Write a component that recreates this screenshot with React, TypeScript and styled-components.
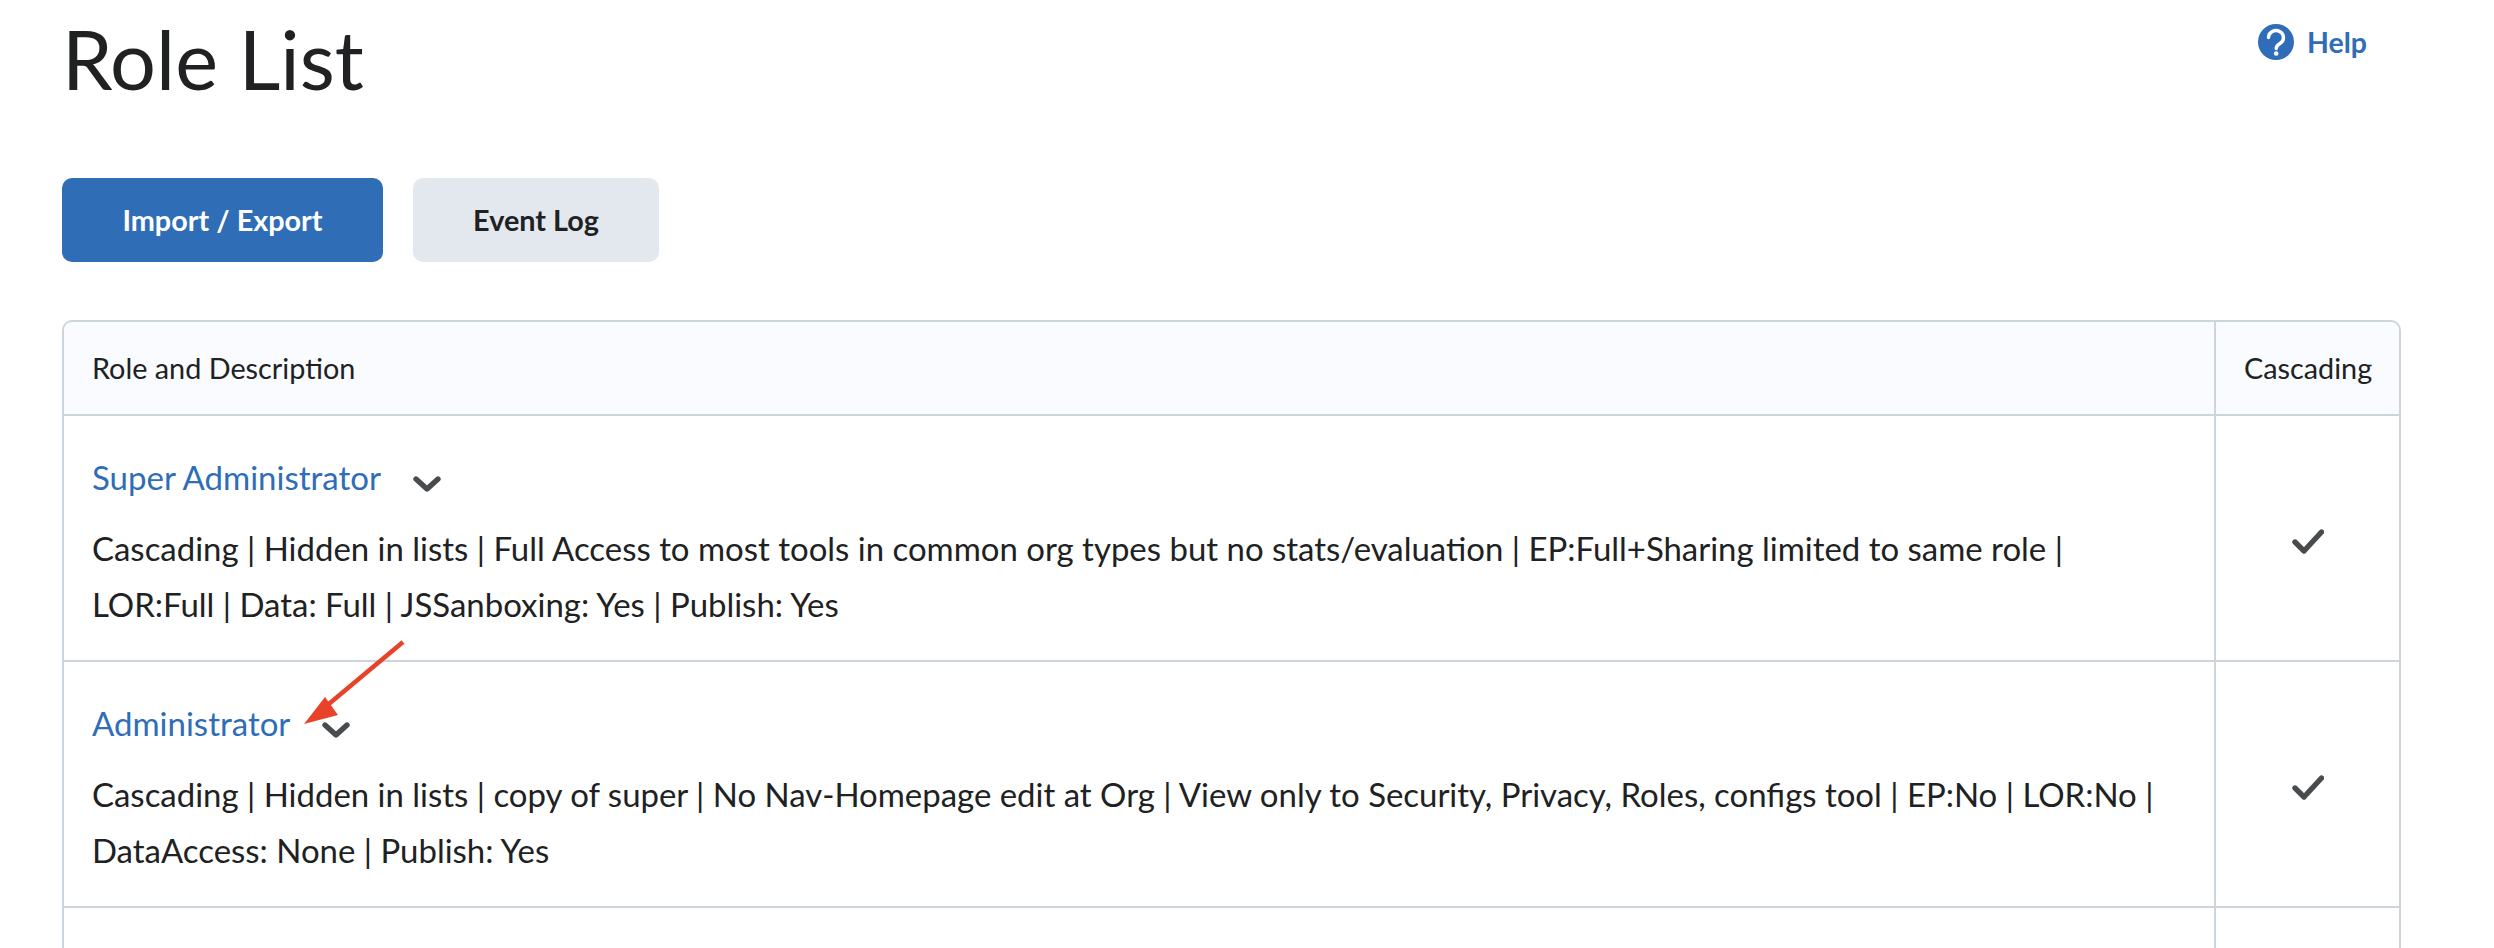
import React from "react";
import styled, { createGlobalStyle } from "styled-components";

const GlobalStyle = createGlobalStyle`
  html, body {
    margin: 0;
    padding: 0;
    background: #ffffff;
    height: 948px;
    overflow: hidden;
  }
  body {
    font-family: Lato, "Open Sans", sans-serif;
    color: #202122;
  }
`;

const Page = styled.main`
  position: relative;
  width: 2494px;
  height: 948px;
  padding: 0 93px 0 62px;
  box-sizing: border-box;
  overflow: hidden;
`;

const TopBar = styled.header`
  display: flex;
  justify-content: space-between;
  align-items: flex-start;
  height: 178px;
`;

const Title = styled.h1`
  margin: 0;
  padding-top: 12px;
  font-size: 81px;
  line-height: 94px;
  font-weight: 400;
`;

const HelpLink = styled.a`
  display: flex;
  align-items: center;
  gap: 13px;
  margin: 24px 34px 0 0;
  height: 36px;
  color: #2f6db8;
  font-size: 28.5px;
  font-weight: 700;
`;

const Actions = styled.div`
  display: flex;
  gap: 30px;
  margin-bottom: 58px;
`;

const Button = styled.button<{ $primary?: boolean }>`
  height: 84px;
  padding: 0;
  width: ${(p) => (p.$primary ? "321px" : "246px")};
  border: none;
  border-radius: 10px;
  background: ${(p) => (p.$primary ? "#306db7" : "#e3e8ef")};
  color: ${(p) => (p.$primary ? "#ffffff" : "#202122")};
  font-family: inherit;
  font-size: 28.8px;
  line-height: 82px;
  font-weight: 700;
`;

const Table = styled.table`
  width: 2339px;
  table-layout: fixed;
  border-collapse: separate;
  border-spacing: 0;
`;

const HeadCell = styled.th<{ $last?: boolean }>`
  height: 96px;
  box-sizing: border-box;
  padding: 0 28px;
  background: #f9fbff;
  font-size: 28.8px;
  font-weight: 400;
  text-align: ${(p) => (p.$last ? "center" : "left")};
  border-top: 2px solid #cdd5dc;
  border-bottom: 2px solid #cdd5dc;
  border-left: 2px solid #cdd5dc;
  border-right: ${(p) => (p.$last ? "2px solid #cdd5dc" : "none")};
  border-top-left-radius: ${(p) => (p.$last ? "0" : "10px")};
  border-top-right-radius: ${(p) => (p.$last ? "10px" : "0")};
`;

const Cell = styled.td<{ $last?: boolean; $height: number }>`
  height: ${(p) => p.$height}px;
  box-sizing: border-box;
  padding: 0 28px;
  vertical-align: middle;
  border-bottom: 2px solid #cdd5dc;
  border-left: 2px solid #cdd5dc;
  border-right: ${(p) => (p.$last ? "2px solid #cdd5dc" : "none")};
  text-align: ${(p) => (p.$last ? "center" : "left")};
`;

const NameRow = styled.div`
  display: flex;
  align-items: center;
  gap: 32px;
  height: 44px;
  margin: 11px 0 22px;
`;

const RoleName = styled.a`
  color: #2f6db8;
  font-size: 33px;
  line-height: 44px;
`;

const Description = styled.p`
  margin: 0;
  font-size: 32.95px;
  line-height: 55.5px;
`;

const Chevron = styled.svg`
  width: 28px;
  height: 16px;
  margin-top: 14px;
  flex: none;
`;

const Check = styled.svg`
  width: 32px;
  height: 25px;
  display: block;
  margin: 7px auto 0;
`;

const Arrow = styled.svg`
  position: absolute;
  left: 300px;
  top: 636px;
  width: 110px;
  height: 92px;
`;

const ChevronIcon = () => (
  <Chevron viewBox="0 0 28 16">
    <path d="M3 3l11 10L25 3" fill="none" stroke="#494c4e" strokeWidth="5.4" strokeLinecap="round" strokeLinejoin="round" />
  </Chevron>
);

const CheckIcon = () => (
  <Check viewBox="0 0 32 25">
    <path d="M3 13l9 9L29.500 3" fill="none" stroke="#494c4e" strokeWidth="5.400" strokeLinecap="round" strokeLinejoin="round" />
  </Check>
);

const HelpIcon = () => (
  <svg width="36" height="36" viewBox="0 0 36 36">
    <circle cx="18" cy="18" r="18" fill="#2f6db8" />
    <path
      d="M10.500 13.500a7.500 7 0 1 1 11.500 6c-2.500 1.600-3.800 2.600-3.800 5"
      fill="none"
      stroke="#ffffff"
      strokeWidth="3.400"
      strokeLinecap="round"
    />
    <circle cx="18.200" cy="29.500" r="2.300" fill="#ffffff" />
  </svg>
);

const roles = [
  {
    name: "Super Administrator",
    height: 246,
    lines: [
      "Cascading | Hidden in lists | Full Access to most tools in common org types but no stats/evaluation | EP:Full+Sharing limited to same role |",
      "LOR:Full | Data: Full | JSSanboxing: Yes | Publish: Yes",
    ],
  },
  {
    name: "Administrator",
    height: 246,
    lines: [
      "Cascading | Hidden in lists | copy of super | No Nav-Homepage edit at Org | View only to Security, Privacy, Roles, configs tool | EP:No | LOR:No |",
      "DataAccess: None | Publish: Yes",
    ],
  },
];

export default function App() {
  return (
    <Page>
      <GlobalStyle />
      <TopBar>
        <Title>Role List</Title>
        <HelpLink>
          <HelpIcon />
          Help
        </HelpLink>
      </TopBar>
      <Actions>
        <Button $primary>Import / Export</Button>
        <Button>Event Log</Button>
      </Actions>
      <Table>
        <colgroup>
          <col />
          <col width="187" />
        </colgroup>
        <thead>
          <tr>
            <HeadCell>Role and Description</HeadCell>
            <HeadCell $last>Cascading</HeadCell>
          </tr>
        </thead>
        <tbody>
          {roles.map((role) => (
            <tr key={role.name}>
              <Cell $height={role.height}>
                <NameRow>
                  <RoleName>{role.name}</RoleName>
                  <ChevronIcon />
                </NameRow>
                <Description>
                  {role.lines[0]}
                  <br />
                  {role.lines[1]}
                </Description>
              </Cell>
              <Cell $last $height={role.height}>
                <CheckIcon />
              </Cell>
            </tr>
          ))}
          <tr>
            <Cell $height={200}></Cell>
            <Cell $last $height={200}></Cell>
          </tr>
        </tbody>
      </Table>
      <Arrow viewBox="0 0 110 92">
        <path d="M103 6L24 72" stroke="#e8432a" strokeWidth="4.500" fill="none" />
        <path d="M4 88L25 61L38 79Z" fill="#e8432a" />
      </Arrow>
    </Page>
  );
}
